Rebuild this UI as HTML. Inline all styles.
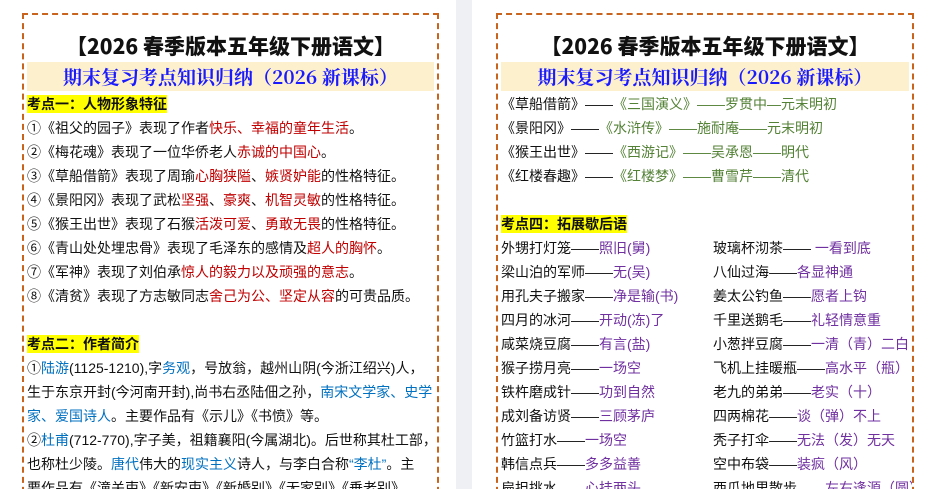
<!DOCTYPE html>
<html style="height:489px;overflow:hidden"><head><meta charset="utf-8"><style>
body{margin:0;width:933px;height:489px;overflow:hidden;background:#fff;font-family:"Liberation Sans","Noto Sans CJK SC",sans-serif;position:relative}
.sep{position:absolute;left:456px;top:0;width:16px;height:489px;background:#eef0f4}
.pg{position:absolute;top:13px;height:490px;border:2px dashed #c8641e;box-sizing:border-box;overflow:hidden}
.t{position:absolute;left:0;right:0;text-align:center;font-family:"Noto Sans CJK SC",sans-serif;font-weight:900;font-size:21px;top:16px;color:#111}
.s{position:absolute;left:3px;right:3px;top:47px;height:29px;background:#fdf0cc;text-align:center;color:#1a1aff;font-weight:bold;font-size:19px;line-height:29px;font-family:"Noto Serif CJK SC",serif}
.l{position:absolute;left:3px;font-size:14px;line-height:24px;white-space:nowrap;color:#111}
.h{background:#ffff00;font-weight:bold;padding:1px 0}
.r{color:#c00000}.b{color:#0070c0}.g{color:#538135}.p{color:#7030a0}
</style></head><body>
<div class="sep"></div>
<div class="pg" style="left:22px;width:417px">
<div class="t">【2026 春季版本五年级下册语文】</div>
<div class="s">期末复习考点知识归纳（2026 新课标）</div>
<div class="l" style="top:77px"><span class="h">考点一：人物形象特征</span></div>
<div class="l" style="top:101px">①《祖父的园子》表现了作者<span class="r">快乐、幸福的童年生活</span>。</div>
<div class="l" style="top:125px">②《梅花魂》表现了一位华侨老人<span class="r">赤诚的中国心</span>。</div>
<div class="l" style="top:149px">③《草船借箭》表现了周瑜<span class="r">心胸狭隘</span>、<span class="r">嫉贤妒能</span>的性格特征。</div>
<div class="l" style="top:173px">④《景阳冈》表现了武松<span class="r">坚强</span>、<span class="r">豪爽</span>、<span class="r">机智灵敏</span>的性格特征。</div>
<div class="l" style="top:197px">⑤《猴王出世》表现了石猴<span class="r">活泼可爱</span>、<span class="r">勇敢无畏</span>的性格特征。</div>
<div class="l" style="top:221px">⑥《青山处处埋忠骨》表现了毛泽东的感情及<span class="r">超人的胸怀</span>。</div>
<div class="l" style="top:245px">⑦《军神》表现了刘伯承<span class="r">惊人的毅力以及顽强的意志</span>。</div>
<div class="l" style="top:269px">⑧《清贫》表现了方志敏同志<span class="r">舍己为公、坚定从容</span>的可贵品质。</div>
<div class="l" style="top:317px"><span class="h">考点二：作者简介</span></div>
<div class="l" style="top:341px">①<span class="b">陆游</span>(1125-1210),字<span class="b">务观</span>，号放翁，越州山阴(今浙江绍兴)人，</div>
<div class="l" style="top:365px">生于东京开封(今河南开封),尚书右丞陆佃之孙，<span class="b">南宋文学家、史学</span></div>
<div class="l" style="top:389px"><span class="b">家、爱国诗人</span>。主要作品有《示儿》《书愤》等。</div>
<div class="l" style="top:413px">②<span class="b">杜甫</span>(712-770),字子美，祖籍襄阳(今属湖北)。后世称其杜工部，</div>
<div class="l" style="top:437px">也称杜少陵。<span class="b">唐代</span>伟大的<span class="b">现实主义</span>诗人，与李白合称<span class="b">“李杜”</span>。主</div>
<div class="l" style="top:461px">要作品有《潼关吏》《新安吏》《新婚别》《无家别》《垂老别》</div>
</div>
<div class="pg" style="left:496px;width:418px">
<div class="t">【2026 春季版本五年级下册语文】</div>
<div class="s">期末复习考点知识归纳（2026 新课标）</div>
<div class="l" style="top:77px">《草船借箭》——<span class="g">《三国演义》——罗贯中—元末明初</span></div>
<div class="l" style="top:101px">《景阳冈》——<span class="g">《水浒传》——施耐庵——元末明初</span></div>
<div class="l" style="top:125px">《猴王出世》——<span class="g">《西游记》——吴承恩——明代</span></div>
<div class="l" style="top:149px">《红楼春趣》——<span class="g">《红楼梦》——曹雪芹——清代</span></div>
<div class="l" style="top:197px"><span class="h">考点四：拓展歇后语</span></div>
<div class="l" style="top:221px">外甥打灯笼——<span class="p">照旧(舅)</span></div>
<div class="l" style="top:245px">梁山泊的军师——<span class="p">无(吴)</span></div>
<div class="l" style="top:269px">用孔夫子搬家——<span class="p">净是输(书)</span></div>
<div class="l" style="top:293px">四月的冰河——<span class="p">开动(冻)了</span></div>
<div class="l" style="top:317px">咸菜烧豆腐——<span class="p">有言(盐)</span></div>
<div class="l" style="top:341px">猴子捞月亮——<span class="p">一场空</span></div>
<div class="l" style="top:365px">铁杵磨成针——<span class="p">功到自然</span></div>
<div class="l" style="top:389px">成刘备访贤——<span class="p">三顾茅庐</span></div>
<div class="l" style="top:413px">竹篮打水——<span class="p">一场空</span></div>
<div class="l" style="top:437px">韩信点兵——<span class="p">多多益善</span></div>
<div class="l" style="top:461px">扁担挑水——<span class="p">心挂两头</span></div>
<div class="l" style="top:221px;left:215px">玻璃杯沏茶—— <span class="p">一看到底</span></div>
<div class="l" style="top:245px;left:215px">八仙过海——<span class="p">各显神通</span></div>
<div class="l" style="top:269px;left:215px">姜太公钓鱼——<span class="p">愿者上钩</span></div>
<div class="l" style="top:293px;left:215px">千里送鹅毛——<span class="p">礼轻情意重</span></div>
<div class="l" style="top:317px;left:215px">小葱拌豆腐——<span class="p">一清（青）二白</span></div>
<div class="l" style="top:341px;left:215px">飞机上挂暖瓶——<span class="p">高水平（瓶）</span></div>
<div class="l" style="top:365px;left:215px">老九的弟弟——<span class="p">老实（十）</span></div>
<div class="l" style="top:389px;left:215px">四两棉花——<span class="p">谈（弹）不上</span></div>
<div class="l" style="top:413px;left:215px">秃子打伞——<span class="p">无法（发）无天</span></div>
<div class="l" style="top:437px;left:215px">空中布袋——<span class="p">装疯（风）</span></div>
<div class="l" style="top:461px;left:215px">西瓜地里散步——<span class="p">左右逢源（圆）</span></div>
</div>
</body></html>
